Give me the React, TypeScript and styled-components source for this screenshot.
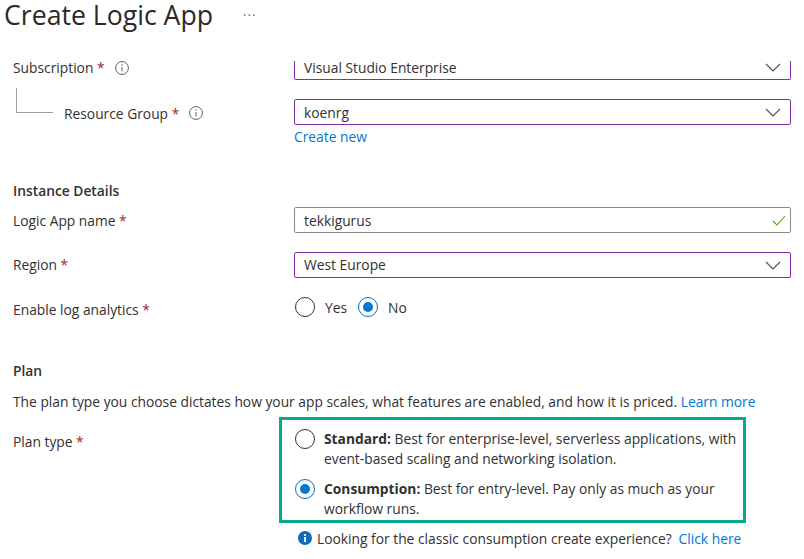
import React, { ReactNode } from 'react'
import styled, { createGlobalStyle } from 'styled-components'

const GlobalStyle = createGlobalStyle`
  html, body {
    margin: 0;
    padding: 0;
    background: #fff;
    overflow: hidden;
  }
  body {
    font-family: 'Open Sans', 'Liberation Sans', sans-serif;
    font-size: 13.8px;
    color: #323130;
  }
`

const Chevron = () => (
  <ChevronIcon viewBox="0 0 16 9" aria-hidden="true">
    <path d="M1 1l7 7 7-7" fill="none" stroke="#505050" strokeWidth="1.1" />
  </ChevronIcon>
)

const Check = () => (
  <CheckIcon viewBox="0 0 14 11" aria-hidden="true">
    <path d="M1 6l4 4 8-9" fill="none" stroke="#57a300" strokeWidth="1.1" />
  </CheckIcon>
)

const InfoOutline = () => (
  <InfoIcon viewBox="0 0 14 14" aria-hidden="true">
    <circle cx="7" cy="7" r="6.4" fill="none" stroke="#605e5c" strokeWidth="1" />
    <path d="M7 6v4.4" stroke="#605e5c" strokeWidth="1" />
    <circle cx="7" cy="4" r="0.7" fill="#605e5c" />
  </InfoIcon>
)

const InfoSolid = () => (
  <SolidInfoIcon viewBox="0 0 14 14" aria-hidden="true">
    <circle cx="7" cy="7" r="7" fill="#0f6cbd" />
    <rect x="6" y="6" width="2" height="5" fill="#fff" />
    <circle cx="7" cy="4" r="1.1" fill="#fff" />
  </SolidInfoIcon>
)

const Required = ({ children }: { children: ReactNode }) => (
  <LabelText>
    {children} <Star>*</Star>
  </LabelText>
)

export default function App() {
  return (
    <Page>
      <GlobalStyle />
      <Header>
        <Title>Create Logic App</Title>
        <Dots>···</Dots>
      </Header>

      <Row $height={19}>
        <Label $offset={-3}>
          <Required>Subscription</Required>
          <InfoOutline />
        </Label>
        <Select $clipped>
          <span>Visual Studio Enterprise</span>
          <Chevron />
        </Select>
      </Row>

      <Row $height={26} $top={19}>
        <NestedLabel $offset={1}>
          <Connector />
          <Required>Resource Group</Required>
          <InfoOutline />
        </NestedLabel>
        <Select>
          <span>koenrg</span>
          <Chevron />
        </Select>
      </Row>

      <Row $height={18} $top={2}>
        <span />
        <Link>Create new</Link>
      </Row>

      <SectionTitle $top={36}>Instance Details</SectionTitle>

      <Row $height={26} $top={6}>
        <Label>
          <Required>Logic App name</Required>
        </Label>
        <TextBox>
          <span>tekkigurus</span>
          <Check />
        </TextBox>
      </Row>

      <Row $height={26} $top={19}>
        <Label $offset={-1}>
          <Required>Region</Required>
        </Label>
        <Select>
          <FieldValue>West Europe</FieldValue>
          <Chevron />
        </Select>
      </Row>

      <Row $height={20} $top={19}>
        <Label $offset={2}>
          <Required>Enable log analytics</Required>
        </Label>
        <RadioGroup>
          <RadioOption>
            <Radio />
            Yes
          </RadioOption>
          <RadioOption>
            <Radio $checked />
            No
          </RadioOption>
        </RadioGroup>
      </Row>

      <SectionTitle $top={44}>Plan</SectionTitle>

      <Description>
        The plan type you choose dictates how your app scales, what features are
        enabled, and how it is priced. <Link>Learn more</Link>
      </Description>

      <PlanRow>
        <PlanLabel>
          <Required>Plan type</Required>
        </PlanLabel>
        <PlanBox>
          <PlanOption>
            <Radio />
            <PlanText>
              <strong>Standard:</strong> Best for enterprise-level, serverless
              applications, with event-based scaling and networking isolation.
            </PlanText>
          </PlanOption>
          <PlanOption>
            <Radio $checked />
            <PlanText>
              <strong>Consumption:</strong> Best for entry-level. Pay only as
              much as your workflow runs.
            </PlanText>
          </PlanOption>
        </PlanBox>
      </PlanRow>

      <Notice>
        <InfoSolid />
        <NoticeText>Looking for the classic consumption create experience?</NoticeText>
        <Link>Click here</Link>
      </Notice>
    </Page>
  )
}

const Page = styled.div`
  width: 804px;
  height: 559px;
  overflow: hidden;
`

const Header = styled.header`
  display: flex;
  align-items: center;
  height: 61px;
  padding: 0 0 30px 4px;
  box-sizing: border-box;
`

const Title = styled.h1`
  margin: 0;
  font-size: 26.65px;
  font-weight: 500;
  line-height: 31px;
  color: #2b2a29;
`

const Dots = styled.span`
  margin-left: 30px;
  font-size: 12px;
  letter-spacing: 1.5px;
  color: #605e5c;
`

const Row = styled.div<{ $height: number; $top?: number }>`
  display: grid;
  grid-template-columns: 294px 497px;
  height: ${(p) => p.$height}px;
  margin-top: ${(p) => p.$top ?? 0}px;
  align-items: center;
`

const Label = styled.div<{ $offset?: number }>`
  display: flex;
  align-items: center;
  gap: 10px;
  padding-left: 13px;
  transform: translateY(${(p) => p.$offset ?? 0}px);
`

const NestedLabel = styled(Label)`
  position: relative;
  padding-left: 64px;
`

const Connector = styled.span`
  position: absolute;
  left: 16px;
  top: -16px;
  width: 36px;
  height: 24px;
  border-left: 1px solid #a19f9d;
  border-bottom: 1px solid #a19f9d;
`

const LabelText = styled.span`
  white-space: nowrap;
`

const Star = styled.span`
  color: #a4262c;
`

const FieldValue = styled.span`
  margin-top: -2px;
`

const InfoIcon = styled.svg`
  width: 14px;
  height: 14px;
`

const SolidInfoIcon = styled.svg`
  width: 14px;
  height: 14px;
  flex: none;
`

const ChevronIcon = styled.svg`
  width: 16px;
  height: 9px;
`

const CheckIcon = styled.svg`
  width: 14px;
  height: 11px;
`

const TextBox = styled.div`
  display: flex;
  align-items: center;
  justify-content: space-between;
  height: 26px;
  box-sizing: border-box;
  padding: 0 4px 0 9px;
  border: 1px solid #8a8886;
  border-radius: 2px;
`

const Select = styled.div<{ $clipped?: boolean }>`
  display: flex;
  align-items: center;
  justify-content: space-between;
  box-sizing: border-box;
  height: ${(p) => (p.$clipped ? 19 : 26)}px;
  padding: 0 9px;
  padding-bottom: ${(p) => (p.$clipped ? 5 : 0)}px;
  border: 1px solid #8a2da5;
  border-top-width: ${(p) => (p.$clipped ? 0 : 1)}px;
  border-radius: ${(p) => (p.$clipped ? '0 0 2px 2px' : '2px')};
`

const Link = styled.a`
  color: #0078d4;
  cursor: pointer;
  white-space: nowrap;
`

const SectionTitle = styled.h2<{ $top: number }>`
  margin: ${(p) => p.$top}px 0 0;
  padding-left: 13px;
  height: 20px;
  line-height: 20px;
  font-size: 13.8px;
  font-weight: 600;
  color: #323130;
`

const RadioGroup = styled.div`
  display: flex;
  align-items: center;
  gap: 11px;
  padding-left: 1px;
`

const RadioOption = styled.label`
  display: flex;
  align-items: center;
  gap: 10px;
`

const Radio = styled.span<{ $checked?: boolean }>`
  flex: none;
  position: relative;
  display: block;
  width: 20px;
  height: 20px;
  box-sizing: border-box;
  border-radius: 50%;
  border: 1px solid ${(p) => (p.$checked ? '#0f6cbd' : '#323130')};

  &::after {
    content: '';
    display: ${(p) => (p.$checked ? 'block' : 'none')};
    position: absolute;
    top: 4px;
    left: 4px;
    width: 10px;
    height: 10px;
    border-radius: 50%;
    background: #0078d4;
  }
`

const Description = styled.p`
  margin: 11px 0 0;
  padding-left: 13px;
  height: 20px;
  line-height: 20px;
  white-space: nowrap;
`

const PlanRow = styled.div`
  display: grid;
  grid-template-columns: 279px 467px;
  margin-top: 5px;
`

const PlanLabel = styled(Label)`
  padding-top: 15px;
  align-items: flex-start;
`

const PlanBox = styled.div`
  display: flex;
  flex-direction: column;
  gap: 10px;
  height: 106px;
  box-sizing: border-box;
  padding: 9px 4px 0 13px;
  border: 3px solid #00ad8e;
`

const PlanOption = styled.label`
  display: flex;
  align-items: flex-start;
  gap: 9px;
`

const PlanText = styled.span`
  line-height: 20px;

  strong {
    font-weight: 700;
  }
`

const Notice = styled.div`
  display: flex;
  align-items: center;
  gap: 5px;
  height: 20px;
  margin-top: 5px;
  padding-left: 298px;
`

const NoticeText = styled.span`
  margin-right: 2px;
`
